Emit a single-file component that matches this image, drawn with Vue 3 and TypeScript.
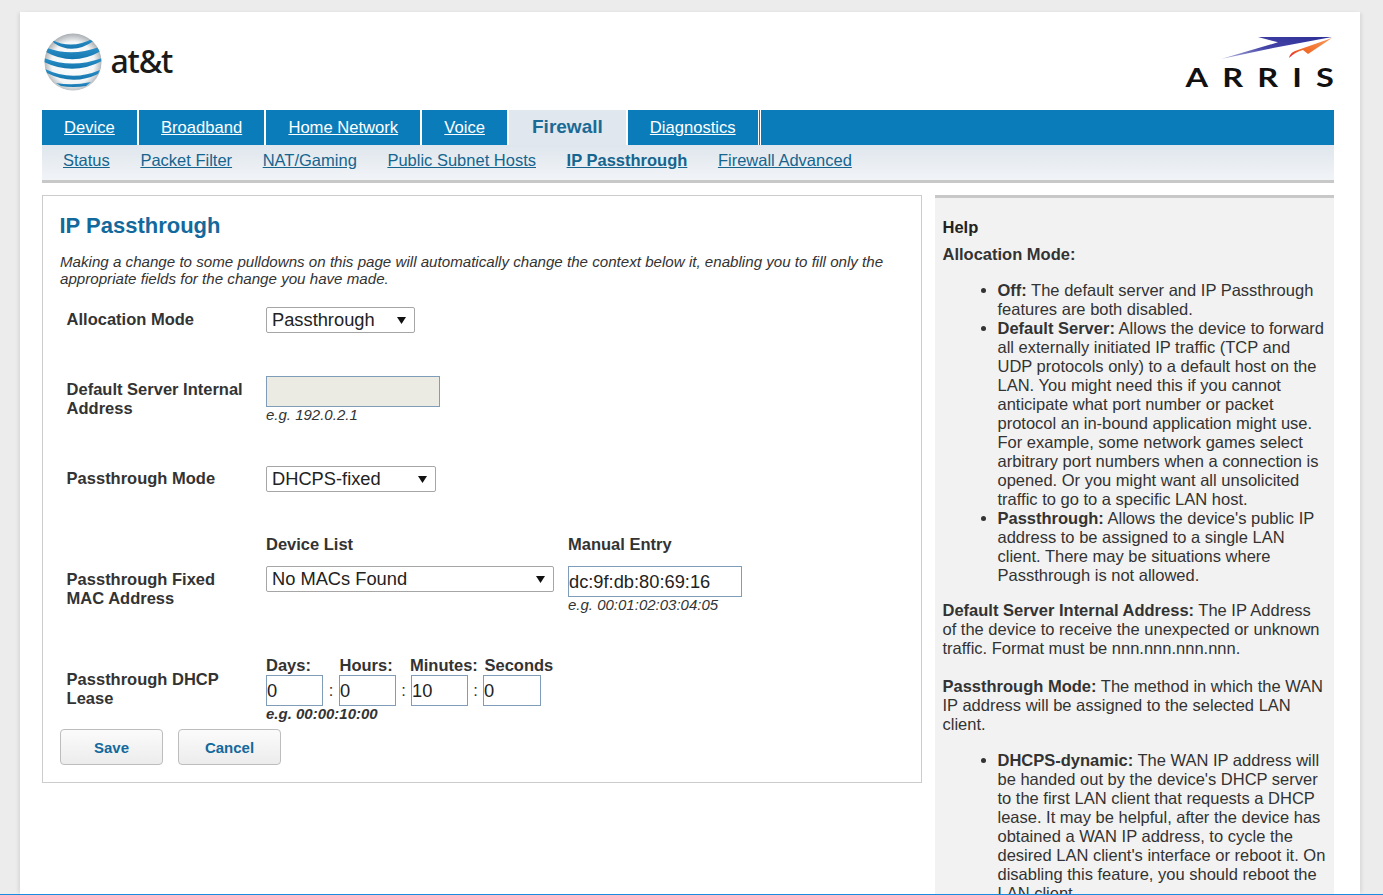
<script setup lang="ts">
const tabs = [
  { label: 'Device' },
  { label: 'Broadband' },
  { label: 'Home Network' },
  { label: 'Voice' },
  { label: 'Firewall', active: true },
  { label: 'Diagnostics', last: true },
]
const subs = [
  { label: 'Status' },
  { label: 'Packet Filter' },
  { label: 'NAT/Gaming' },
  { label: 'Public Subnet Hosts' },
  { label: 'IP Passthrough', active: true },
  { label: 'Firewall Advanced' },
]
</script>

<template>
  <div class="page">
    <div class="sheet">
      <header class="brand">
        <div class="att">
          <svg class="globe" viewBox="0 0 58 58" width="58" height="58" aria-hidden="true">
            <defs>
              <radialGradient id="sphere" cx="0.5" cy="0.52" r="0.52">
                <stop offset="0" stop-color="#ffffff" />
                <stop offset="0.72" stop-color="#f3f5f6" />
                <stop offset="1" stop-color="#a9aeb2" />
              </radialGradient>
              <linearGradient id="band" x1="0" y1="0" x2="0" y2="1">
                <stop offset="0" stop-color="#2a90c9" />
                <stop offset="1" stop-color="#1677b0" />
              </linearGradient>
              <clipPath id="ball"><circle cx="29" cy="29" r="28.5" /></clipPath>
            </defs>
            <circle cx="29" cy="29" r="28.5" fill="url(#sphere)" />
            <g clip-path="url(#ball)" fill="url(#band)">
              <path d="M8 7 Q28 17 50 5 L51 7 Q29 23 10 10 Z" />
              <path d="M3 15 Q28 24 55 14 L57 18 Q29 34 2 19 Z" />
              <path d="M0 25 Q28 36 58 25 L58 28 Q29 43 0 29 Z" />
              <path d="M1 36 Q28 49 56 37 L54 41 Q29 53 3 40 Z" />
              <path d="M12 50 Q29 53 47 49 L42 53 Q29 55 17 53 Z" />
            </g>
          </svg>
          <span class="att-word">at&amp;t</span>
        </div>
        <div class="arris">
          <svg class="swoosh" viewBox="0 0 112 24" width="112" height="24" aria-hidden="true">
            <defs>
              <linearGradient id="blue" x1="0" y1="1" x2="1" y2="0">
                <stop offset="0" stop-color="#b4b4e0" />
                <stop offset="0.45" stop-color="#4444a8" />
                <stop offset="1" stop-color="#2e2f96" />
              </linearGradient>
              <linearGradient id="orange" x1="0" y1="1" x2="1" y2="0">
                <stop offset="0" stop-color="#e8202a" />
                <stop offset="0.35" stop-color="#f26a26" />
                <stop offset="1" stop-color="#f79a5c" />
              </linearGradient>
            </defs>
            <path d="M37 0 H111 L52 11 L0 22 L57 5.3 Z" fill="url(#blue)" />
            <path d="M68 21 Q69 16 74 14 L111 1 L87 17 L82 13 Q74 15 68 21 Z" fill="url(#orange)" />
          </svg>
          <span class="arris-word">ARRIS</span>
        </div>
      </header>

      <nav class="tabs">
        <a
          v-for="t in tabs"
          :key="t.label"
          class="tab"
          :class="{ active: t.active, last: t.last }"
          href="#"
        >{{ t.label }}</a>
      </nav>
      <nav class="subs">
        <a
          v-for="s in subs"
          :key="s.label"
          class="sub"
          :class="{ active: s.active }"
          href="#"
        >{{ s.label }}</a>
      </nav>

      <div class="columns">
        <main class="panel">
          <h1>IP Passthrough</h1>
          <p class="intro">Making a change to some pulldowns on this page will automatically change the context below it, enabling you to fill only the appropriate fields for the change you have made.</p>

          <div class="row row-alloc">
            <label class="lbl">Allocation Mode</label>
            <div class="field">
              <select class="sel sel-alloc"><option>Passthrough</option></select>
            </div>
          </div>

          <div class="row row-server">
            <label class="lbl lbl-low">Default Server Internal Address</label>
            <div class="field">
              <input class="inp inp-disabled" type="text" disabled />
              <div class="hint">e.g. 192.0.2.1</div>
            </div>
          </div>

          <div class="row row-mode">
            <label class="lbl">Passthrough Mode</label>
            <div class="field">
              <select class="sel sel-mode"><option>DHCPS-fixed</option></select>
            </div>
          </div>

          <div class="row row-mac">
            <label class="lbl lbl-mac">Passthrough Fixed MAC Address</label>
            <div class="mac">
              <div class="mac-list">
                <div class="head">Device List</div>
                <select class="sel sel-list"><option>No MACs Found</option></select>
              </div>
              <div class="mac-entry">
                <div class="head">Manual Entry</div>
                <input class="inp inp-mac" type="text" value="dc:9f:db:80:69:16" />
                <div class="hint">e.g. 00:01:02:03:04:05</div>
              </div>
            </div>
          </div>

          <div class="row row-lease">
            <label class="lbl lbl-lease">Passthrough DHCP Lease</label>
            <div class="field">
              <div class="lease-heads">
                <span class="lh lh-days">Days:</span>
                <span class="lh lh-hours">Hours:</span>
                <span class="lh lh-mins">Minutes:</span>
                <span class="lh">Seconds</span>
              </div>
              <div class="lease-inputs">
                <input class="inp inp-time" type="text" value="0" />
                <span class="colon">:</span>
                <input class="inp inp-time" type="text" value="0" />
                <span class="colon">:</span>
                <input class="inp inp-time" type="text" value="10" />
                <span class="colon">:</span>
                <input class="inp inp-time inp-time-last" type="text" value="0" />
              </div>
              <div class="hint hint-bold">e.g. 00:00:10:00</div>
            </div>
          </div>

          <div class="actions">
            <button class="btn" type="button">Save</button>
            <button class="btn" type="button">Cancel</button>
          </div>
        </main>

        <aside class="help">
          <h2>Help</h2>
          <p class="help-head"><b>Allocation Mode:</b></p>
          <ul>
            <li><b>Off:</b> The default server and IP Passthrough features are both disabled.</li>
            <li><b>Default Server:</b> Allows the device to forward all externally initiated IP traffic (TCP and UDP protocols only) to a default host on the LAN. You might need this if you cannot anticipate what port number or packet protocol an in-bound application might use. For example, some network games select arbitrary port numbers when a connection is opened. Or you might want all unsolicited traffic to go to a specific LAN host.</li>
            <li><b>Passthrough:</b> Allows the device's public IP address to be assigned to a single LAN client. There may be situations where Passthrough is not allowed.</li>
          </ul>
          <p class="help-p1"><b>Default Server Internal Address:</b> The IP Address of the device to receive the unexpected or unknown traffic. Format must be nnn.nnn.nnn.nnn.</p>
          <p class="help-p2"><b>Passthrough Mode:</b> The method in which the WAN IP address will be assigned to the selected LAN client.</p>
          <ul>
            <li><b>DHCPS-dynamic:</b> The WAN IP address will be handed out by the device's DHCP server to the first LAN client that requests a DHCP lease. It may be helpful, after the device has obtained a WAN IP address, to cycle the desired LAN client's interface or reboot it. On disabling this feature, you should reboot the LAN client.</li>
          </ul>
        </aside>
      </div>
    </div>
    <div class="rule"></div>
  </div>
</template>

<style>
html, body { margin: 0; height: 100%; overflow: hidden; background: #ececec; }
</style>

<style scoped>
.page {
  height: 895px;
  display: flex;
  flex-direction: column;
  background: #ececec;
  font-family: "Liberation Sans", Arial, sans-serif;
  font-size: 16.5px;
  line-height: 19px;
  color: #333;
}
.sheet {
  flex: 1;
  min-height: 0;
  overflow: hidden;
  box-sizing: border-box;
  width: 1340px;
  margin: 12px 0 0 20px;
  padding: 0 26px 0 22px;
  background: #fff;
  box-shadow: 3px 0 3px -1px rgba(0, 0, 0, 0.08), -3px 0 3px -1px rgba(0, 0, 0, 0.08);
}
.rule { height: 1px; background: #1a8ce0; }

.brand {
  height: 98px;
  display: flex;
  justify-content: space-between;
  box-sizing: border-box;
}
.att { display: flex; align-items: flex-start; padding: 21px 0 0 2px; }
.globe { display: block; }
.att-word {
  margin: 8px 0 0 8.5px;
  font-family: "Noto Sans", sans-serif;
  font-size: 32px;
  font-weight: 500;
  line-height: 40px;
  letter-spacing: -1.2px;
  color: #1a1a1a;
}
.arris { display: flex; flex-direction: column; align-items: flex-end; padding-top: 25px; }
.swoosh { display: block; margin-right: 1px; }
.arris-word {
  margin-top: 2px;
  margin-right: -14.1px;
  font-family: "Lato", sans-serif;
  font-weight: 700;
  font-size: 26px;
  line-height: 28px;
  letter-spacing: 11.3px;
  color: #111;
  transform: scaleX(1.25);
  transform-origin: right center;
}

.tabs { display: flex; height: 35px; background: #0a7cba; }
.tab {
  padding: 0 22.1px;
  font-size: 16.6px;
  line-height: 35px;
  color: #fff;
  border-right: 2px solid #fff;
}
.tab.active {
  background: #e0e7ee;
  color: #1b6a96;
  font-weight: 700;
  font-size: 19px;
  line-height: 33px;
  text-decoration: none;
  padding: 0 23px;
}
.tab.last { border-right: 3px double #fff; }
.subs {
  display: flex;
  gap: 30.6px;
  height: 35px;
  padding-left: 21px;
  background: linear-gradient(#dfe6ed, #f1f4f7);
  border-bottom: 3px solid #c8c8c8;
  line-height: 31px;
}
.sub { color: #15658f; }
.sub.active { font-weight: 700; }

.columns { display: flex; gap: 13px; margin-top: 12px; align-items: flex-start; }

.panel {
  box-sizing: border-box;
  width: 880px;
  height: 588px;
  flex: none;
  padding: 17px 17px 0;
  border: 1px solid #ccc;
}
h1 {
  margin: 0 0 0 -0.5px;
  font-size: 22px;
  line-height: 26px;
  font-weight: 700;
  color: #13699c;
}
.intro {
  margin: 14px 0 20px;
  font-style: italic;
  font-size: 15.13px;
  line-height: 17px;
}
.row {
  display: grid;
  grid-template-columns: 199.4px 1fr;
  padding-left: 6.6px;
}
.row-alloc { margin-bottom: 43px; }
.row-server { margin-bottom: 42px; }
.row-mode { margin-bottom: 43px; }
.row-mac { margin-bottom: 42px; }
.row-lease { margin-bottom: 6px; }
.lbl { display: block; font-weight: 700; padding-top: 3px; padding-right: 15px; }
.lbl-low { padding-top: 4px; }
.lbl-mac { padding-top: 35px; }
.lbl-lease { padding-top: 14px; }
.field { min-width: 0; }
.sel {
  display: block;
  box-sizing: border-box;
  height: 26px;
  padding: 0 0 2px 5px;
  appearance: none;
  font-family: inherit;
  font-size: 18.3px;
  color: #222;
  background: #fff url("data:image/svg+xml,%3Csvg xmlns='http://www.w3.org/2000/svg' width='9' height='7'%3E%3Cpath d='M0 0H9L4.5 7Z' fill='%23111'/%3E%3C/svg%3E") no-repeat right 8px top 9px;
  border: 1px solid #a6a6a6;
  border-radius: 2px;
}
.sel-alloc { width: 149px; }
.sel-mode { width: 170px; }
.sel-list { width: 288px; }
.inp {
  display: block;
  box-sizing: border-box;
  height: 31px;
  padding: 0;
  font-family: inherit;
  font-size: 18.3px;
  color: #222;
  background: #fff;
  border: 1px solid #7f9db9;
  border-radius: 0;
  outline: none;
}
.inp-disabled { width: 174px; background: #ebebe4; }
.inp-mac { width: 174px; }
.inp-time { width: 57px; }
.inp-time-last { width: 58px; }
.hint { font-style: italic; font-size: 15px; line-height: 15px; padding-bottom: 2px; }
.hint-bold { font-weight: 700; }
.mac { display: flex; gap: 14px; }
.mac-list { width: 288px; }
.head { font-weight: 700; height: 31px; line-height: 19px; }
.lease-heads { display: flex; font-weight: 700; height: 19px; }
.lh { flex: none; }
.lh-days { width: 73.5px; }
.lh-hours { width: 70.5px; }
.lh-mins { width: 74.5px; }
.lease-inputs { display: flex; align-items: center; }
.colon { width: 16px; text-align: center; }
.colon + .inp ~ .colon { width: 15px; }
.actions { display: flex; gap: 15px; }
.btn {
  box-sizing: border-box;
  width: 103px;
  height: 36px;
  padding: 0;
  font-family: inherit;
  font-size: 15px;
  font-weight: 700;
  color: #13699c;
  background: linear-gradient(#fbfbfb, #ececec);
  border: 1px solid #bdbdbd;
  border-radius: 4px;
}

.help {
  box-sizing: border-box;
  width: 399px;
  height: 760px;
  flex: none;
  padding: 20px 8px 0 7.5px;
  background: #f2f2f2;
  border-top: 3px solid #c8c8c8;
}
.help h2 { margin: 0 0 8px; font-size: 16.5px; line-height: 19px; font-weight: 700; color: #222; }
.help p { margin: 0; }
.help-head { margin-bottom: 17px !important; }
.help ul { margin: 0 0 0 15px; padding: 0 0 0 40px; }
.help-p1 { margin-top: 16px !important; }
.help-p2 { margin-top: 19px !important; }
.help-p2 + ul { margin-top: 17px; }
</style>
